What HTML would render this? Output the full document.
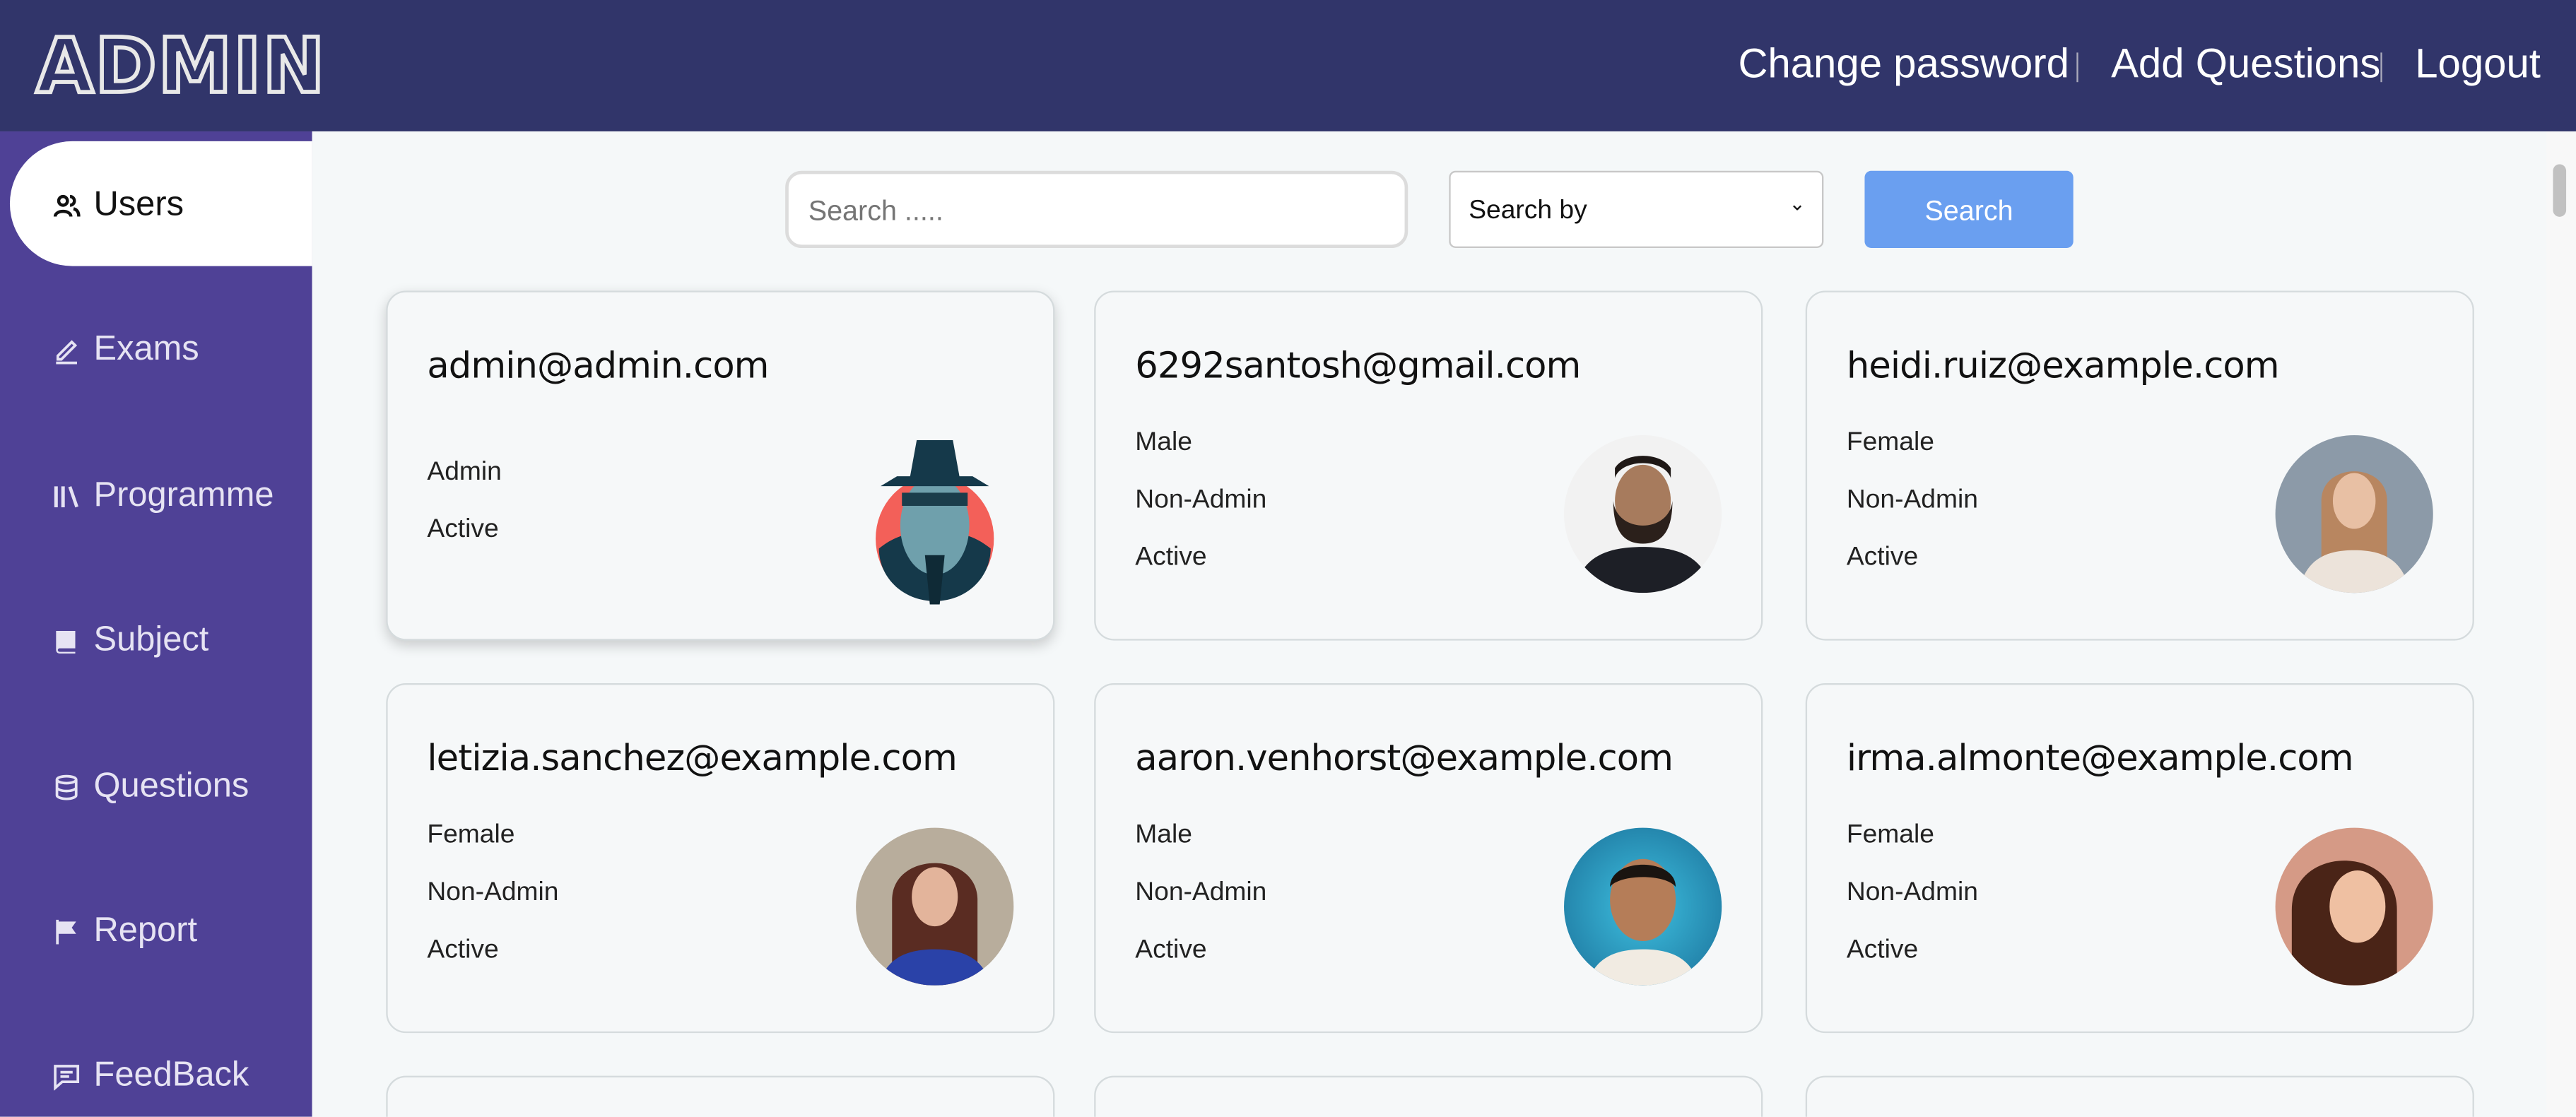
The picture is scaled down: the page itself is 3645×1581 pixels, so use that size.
<!DOCTYPE html>
<html><head><meta charset="utf-8"><style>
*{box-sizing:border-box;margin:0;padding:0}
html,body{width:3645px;height:1581px;overflow:hidden;background:#f5f8f9}
#w{width:1568px;height:680px;overflow:hidden;transform:scale(2.32462);transform-origin:0 0;position:relative;font-family:"Liberation Sans","DejaVu Sans",sans-serif}
.hdr{position:absolute;left:0;top:0;width:1568px;height:80px;background:#31356a}
.logo{position:absolute;left:22px;top:13px;font:900 46px "DejaVu Sans",sans-serif;color:#31356a;-webkit-text-stroke:2.5px #e8e8e8;letter-spacing:1px;transform:scaleX(0.98);transform-origin:0 0}
.nav{position:absolute;top:25px;font-size:25px;color:#fff;font-family:"Liberation Sans",sans-serif;letter-spacing:0px}
.sep{position:absolute;top:32px;width:1px;height:18px;background:#aab}
.side{position:absolute;left:0;top:80px;width:190px;height:600px;background:#4f4196}
.act{position:absolute;left:6px;top:86px;width:184px;height:76px;background:#fff;border-radius:40px 0 0 40px}
.mi{position:absolute;left:32px;font-size:21px;color:#e6e3f3;display:flex;align-items:center;gap:8px;height:30px}
.mi svg{width:17px;height:17px}
.main{position:absolute;left:190px;top:80px;width:1360px;height:600px;background:#f5f8f9}
.sb{position:absolute;left:1550px;top:80px;width:18px;height:600px;background:#f8f8f8}
.inp{position:absolute;left:478px;top:104px;width:379px;height:47px;border:2px solid #dcdcdc;border-radius:10px;background:#fff;font-size:17px;color:#757575;padding:13px 12px}
.sel{position:absolute;left:882px;top:104px;width:228px;height:47px;border:1px solid #c8c8c8;border-radius:4px;background:#fff;font-size:16px;color:#111;padding:15px 11px}
.btn{position:absolute;left:1135px;top:104px;width:127px;height:47px;border-radius:4px;background:#6a9ff0;color:#fff;font-size:17px;text-align:center;line-height:49px}
.card{position:absolute;width:407px;height:213px;border:1.5px solid #d5dbdd;border-radius:12px;background:#f6f8f9}
.card h3{position:absolute;left:24px;top:33px;font-size:22px;font-weight:500;color:#111;font-family:"DejaVu Sans",sans-serif;letter-spacing:-0.4px}
.card p{position:absolute;left:24px;font-size:16px;color:#222;font-weight:300}
.av{position:absolute;right:24px;top:87px;width:96px;height:96px;border-radius:50%;overflow:hidden}
</style></head><body><div id="w">
<div class="hdr"></div>
<div class="logo">ADMIN</div>
<div class="nav" style="left:1058px">Change password</div>
<div class="sep" style="left:1264px"></div>
<div class="nav" style="left:1285px">Add Questions</div>
<div class="sep" style="left:1449px"></div>
<div class="nav" style="left:1470px">Logout</div>
<div class="side"></div>
<div class="act"></div>
<div class="mi" style="top:110px;color:#111"><svg viewBox="0 0 16 16" fill="none" stroke="#111" stroke-width="1.8"><circle cx="6" cy="5" r="2.5"/><path d="M1.5 14c0-4 9-4 9 0M10 2.5a2.5 2.5 0 010 5M12 9.5c2 .5 3 2 3 4.5"/></svg>Users</div>
<div class="mi" style="top:198px"><svg viewBox="0 0 16 16" fill="none" stroke="#e6e3f3" stroke-width="1.5"><path d="M3 11l8-8 2 2-8 8H3zM2 15h12"/></svg>Exams</div>
<div class="mi" style="top:287px"><svg viewBox="0 0 16 16" fill="#e6e3f3"><rect x="1" y="2" width="2" height="12"/><rect x="5" y="2" width="2" height="12"/><path d="M9 2.5l1.8-.6 4 11.6-1.8.6z"/></svg>Programme</div>
<div class="mi" style="top:375px"><svg viewBox="0 0 16 16" fill="#e6e3f3"><path d="M2 2h11v10H4a1 1 0 000 2h9v1H4a2 2 0 01-2-2z"/></svg>Subject</div>
<div class="mi" style="top:464px"><svg viewBox="0 0 16 16" fill="none" stroke="#e6e3f3" stroke-width="1.5"><ellipse cx="8" cy="3.5" rx="5.5" ry="2"/><path d="M2.5 3.5v9c0 1 2.5 2 5.5 2s5.5-1 5.5-2v-9M2.5 8c0 1 2.5 2 5.5 2s5.5-1 5.5-2"/></svg>Questions</div>
<div class="mi" style="top:552px"><svg viewBox="0 0 16 16" fill="#e6e3f3"><path d="M2 1h1.5v14H2zM3.5 2h10l-2.5 3.5 2.5 3.5h-10z"/></svg>Report</div>
<div class="mi" style="top:640px"><svg viewBox="0 0 16 16" fill="none" stroke="#e6e3f3" stroke-width="1.5"><path d="M1.5 2h13v9h-9l-4 3.5zM4.5 5.5h7M4.5 8h5"/></svg>FeedBack</div>
<div class="main"></div>
<div class="sb"><div style="position:absolute;left:4px;top:20px;width:8px;height:32px;border-radius:4px;background:#c1c1c1"></div></div>
<div class="inp">Search .....</div>
<div class="sel">Search by<span style="position:absolute;right:10px;top:12px;font-size:12px">&#8964;</span></div>
<div class="btn">Search</div>

<div class="card" style="left:235px;top:177px;box-shadow:0 3px 8px rgba(0,0,0,.18)"><h3>admin@admin.com</h3><p style="top:101px">Admin</p><p style="top:136px">Active</p>
<div class="av" style="right:36px;width:72px;top:90px;height:100px;border-radius:0;overflow:visible"><svg width="72" height="100" viewBox="0 0 72 100"><ellipse cx="36" cy="60" rx="36" ry="38" fill="#f36059"/><path d="M2 66c10-8 18-10 34-10s24 2 34 10c0 18-15 32-34 32S2 84 2 66z" fill="#15394a"/><ellipse cx="36" cy="52" rx="21" ry="30" fill="#6fa0ac"/><path d="M30 70h12l-3 30h-6z" fill="#0f2a36"/><path d="M3 28h66l-10-6h-8l-4-22h-22l-4 22h-8z" fill="#15394a"/><rect x="16" y="32" width="40" height="8" fill="#1b3d4b"/></svg></div></div>
<div class="card" style="left:666px;top:177px"><h3>6292santosh@gmail.com</h3><p style="top:83px">Male</p><p style="top:118px">Non-Admin</p><p style="top:153px">Active</p><div class="av" style="background:#f2f2f2"><svg width="96" height="96"><ellipse cx="48" cy="40" rx="17" ry="22" fill="#a77b5d"/><path d="M30 40c2 20 34 20 36 0c0 18-6 26-18 26s-18-8-18-26z" fill="#2b201b"/><path d="M31 26c4-12 30-12 34 0v-6c-6-10-28-10-34 0z" fill="#1e1816"/><path d="M6 96c4-22 20-28 42-28s38 6 42 28z" fill="#1d1f26"/></svg></div></div>
<div class="card" style="left:1099px;top:177px"><h3>heidi.ruiz@example.com</h3><p style="top:83px">Female</p><p style="top:118px">Non-Admin</p><p style="top:153px">Active</p><div class="av" style="background:#8c9aa8"><svg width="96" height="96"><path d="M28 40c0-24 40-24 40 0v40H28z" fill="#b88660"/><ellipse cx="48" cy="40" rx="13" ry="17" fill="#e8c0a4"/><path d="M14 96c4-20 16-26 34-26s30 6 34 26z" fill="#ece3da"/></svg></div></div>

<div class="card" style="left:235px;top:416px"><h3>letizia.sanchez@example.com</h3><p style="top:83px">Female</p><p style="top:118px">Non-Admin</p><p style="top:153px">Active</p><div class="av" style="background:#b8ad9c"><svg width="96" height="96"><path d="M22 44c0-30 52-30 52 0v52H22z" fill="#5a2c22"/><ellipse cx="48" cy="42" rx="14" ry="18" fill="#e3b49b"/><path d="M14 96c4-16 16-22 34-22s30 6 34 22z" fill="#2a42a8"/></svg></div></div>
<div class="card" style="left:666px;top:416px"><h3>aaron.venhorst@example.com</h3><p style="top:83px">Male</p><p style="top:118px">Non-Admin</p><p style="top:153px">Active</p><div class="av" style="background:radial-gradient(circle,#3ec0e0,#1a6f98)"><svg width="96" height="96"><ellipse cx="48" cy="44" rx="20" ry="25" fill="#b57d58"/><path d="M28 36c0-18 40-18 40 0c-6-8-34-8-40 0z" fill="#1a1410"/><path d="M14 96c4-16 16-22 34-22s30 6 34 22z" fill="#f1ebe2"/></svg></div></div>
<div class="card" style="left:1099px;top:416px"><h3>irma.almonte@example.com</h3><p style="top:83px">Female</p><p style="top:118px">Non-Admin</p><p style="top:153px">Active</p><div class="av" style="background:#d59a86"><svg width="96" height="96"><path d="M10 50c0-40 64-40 64 0v46H10z" fill="#4a2417"/><ellipse cx="50" cy="48" rx="17" ry="22" fill="#efc0a2"/></svg></div></div>

<div class="card" style="left:235px;top:655px"></div>
<div class="card" style="left:666px;top:655px"></div>
<div class="card" style="left:1099px;top:655px"></div>
</div></body></html>
